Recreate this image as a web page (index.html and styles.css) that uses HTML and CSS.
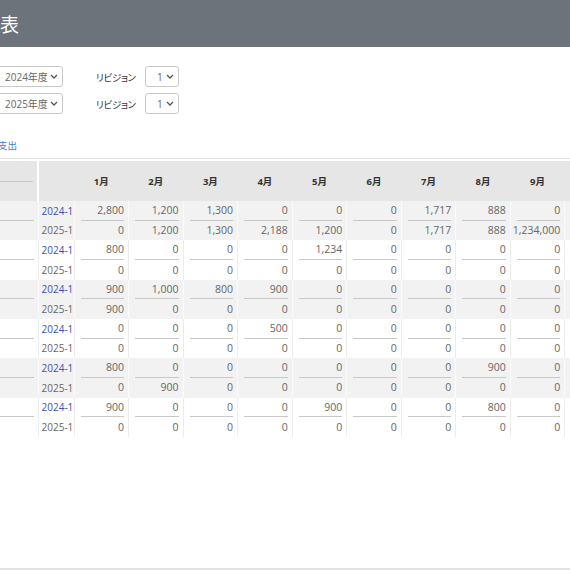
FILE: index.html
```html
<!DOCTYPE html>
<html lang="ja">
<head>
<meta charset="utf-8">
<link rel="stylesheet" href="styles.css">
</head>
<body>
<header class="topbar"><h1 class="title">表</h1></header>
<main class="content">
  <div class="filters">
    <div class="frow">
      <div class="sel sel-year"><span>2024年度</span><svg class="chev" viewBox="0 0 8 5" width="8" height="5"><path d="M1 1l3 3 3-3" fill="none" stroke="#555" stroke-width="1.3"/></svg></div>
      <span class="flabel">リビジョン</span>
      <div class="sel sel-rev"><span>1</span><svg class="chev" viewBox="0 0 8 5" width="8" height="5"><path d="M1 1l3 3 3-3" fill="none" stroke="#555" stroke-width="1.3"/></svg></div>
    </div>
    <div class="frow">
      <div class="sel sel-year"><span>2025年度</span><svg class="chev" viewBox="0 0 8 5" width="8" height="5"><path d="M1 1l3 3 3-3" fill="none" stroke="#555" stroke-width="1.3"/></svg></div>
      <span class="flabel">リビジョン</span>
      <div class="sel sel-rev"><span>1</span><svg class="chev" viewBox="0 0 8 5" width="8" height="5"><path d="M1 1l3 3 3-3" fill="none" stroke="#555" stroke-width="1.3"/></svg></div>
    </div>
  </div>
  <nav class="tabs"><a class="tab" href="#">支出</a></nav>
  <table class="grid">
    <colgroup>
      <col class="c-label"><col class="c-rev">
      <col class="c-m"><col class="c-m"><col class="c-m"><col class="c-m"><col class="c-m"><col class="c-m"><col class="c-m"><col class="c-m"><col class="c-m"><col class="c-m">
    </colgroup>
    <thead>
      <tr>
        <th class="h-label"><div class="h-split"></div></th>
        <th class="h-rev"></th>
        <th>1月</th><th>2月</th><th>3月</th><th>4月</th><th>5月</th><th>6月</th><th>7月</th><th>8月</th><th>9月</th><th>10月</th>
      </tr>
    </thead>
    <tbody>
      <tr class="g first"><td class="lab"><div class="u"></div></td><td class="rev"><a href="#">2024-1</a></td><td><div class="u">2,800</div></td><td><div class="u">1,200</div></td><td><div class="u">1,300</div></td><td><div class="u">0</div></td><td><div class="u">0</div></td><td><div class="u">0</div></td><td><div class="u">1,717</div></td><td><div class="u">888</div></td><td><div class="u">0</div></td><td><div class="u">0</div></td></tr>
      <tr class="g"><td class="lab"></td><td class="rev">2025-1</td><td>0</td><td>1,200</td><td>1,300</td><td>2,188</td><td>1,200</td><td>0</td><td>1,717</td><td>888</td><td>1,234,000</td><td>0</td></tr>

      <tr class="first"><td class="lab"><div class="u"></div></td><td class="rev"><a href="#">2024-1</a></td><td><div class="u">800</div></td><td><div class="u">0</div></td><td><div class="u">0</div></td><td><div class="u">0</div></td><td><div class="u">1,234</div></td><td><div class="u">0</div></td><td><div class="u">0</div></td><td><div class="u">0</div></td><td><div class="u">0</div></td><td><div class="u">0</div></td></tr>
      <tr><td class="lab"></td><td class="rev">2025-1</td><td>0</td><td>0</td><td>0</td><td>0</td><td>0</td><td>0</td><td>0</td><td>0</td><td>0</td><td>0</td></tr>

      <tr class="g first"><td class="lab"><div class="u"></div></td><td class="rev"><a href="#">2024-1</a></td><td><div class="u">900</div></td><td><div class="u">1,000</div></td><td><div class="u">800</div></td><td><div class="u">900</div></td><td><div class="u">0</div></td><td><div class="u">0</div></td><td><div class="u">0</div></td><td><div class="u">0</div></td><td><div class="u">0</div></td><td><div class="u">0</div></td></tr>
      <tr class="g"><td class="lab"></td><td class="rev">2025-1</td><td>900</td><td>0</td><td>0</td><td>0</td><td>0</td><td>0</td><td>0</td><td>0</td><td>0</td><td>0</td></tr>

      <tr class="first"><td class="lab"><div class="u"></div></td><td class="rev"><a href="#">2024-1</a></td><td><div class="u">0</div></td><td><div class="u">0</div></td><td><div class="u">0</div></td><td><div class="u">500</div></td><td><div class="u">0</div></td><td><div class="u">0</div></td><td><div class="u">0</div></td><td><div class="u">0</div></td><td><div class="u">0</div></td><td><div class="u">0</div></td></tr>
      <tr><td class="lab"></td><td class="rev">2025-1</td><td>0</td><td>0</td><td>0</td><td>0</td><td>0</td><td>0</td><td>0</td><td>0</td><td>0</td><td>0</td></tr>

      <tr class="g first"><td class="lab"><div class="u"></div></td><td class="rev"><a href="#">2024-1</a></td><td><div class="u">800</div></td><td><div class="u">0</div></td><td><div class="u">0</div></td><td><div class="u">0</div></td><td><div class="u">0</div></td><td><div class="u">0</div></td><td><div class="u">0</div></td><td><div class="u">900</div></td><td><div class="u">0</div></td><td><div class="u">0</div></td></tr>
      <tr class="g"><td class="lab"></td><td class="rev">2025-1</td><td>0</td><td>900</td><td>0</td><td>0</td><td>0</td><td>0</td><td>0</td><td>0</td><td>0</td><td>0</td></tr>

      <tr class="first"><td class="lab"><div class="u"></div></td><td class="rev"><a href="#">2024-1</a></td><td><div class="u">900</div></td><td><div class="u">0</div></td><td><div class="u">0</div></td><td><div class="u">0</div></td><td><div class="u">900</div></td><td><div class="u">0</div></td><td><div class="u">0</div></td><td><div class="u">800</div></td><td><div class="u">0</div></td><td><div class="u">0</div></td></tr>
      <tr><td class="lab"></td><td class="rev">2025-1</td><td>0</td><td>0</td><td>0</td><td>0</td><td>0</td><td>0</td><td>0</td><td>0</td><td>0</td><td>0</td></tr>
    </tbody>
  </table>
</main>
<footer class="foot"></footer>
</body>
</html>
```
FILE: styles.css
```css
html, body {
  margin: 0;
  padding: 0;
  overflow: hidden;
  background: #fff;
}
body {
  font-family: "Open Sans", "Noto Sans CJK JP", sans-serif;
  color: #555;
  display: flex;
  flex-direction: column;
  min-height: 100vh;
  height: 100vh;
}
.topbar {
  height: 47px;
  background: #6c737b;
  display: flex;
  align-items: center;
  flex-shrink: 0;
}
.title {
  margin: 0;
  font-family: "Noto Sans CJK JP", sans-serif;
  font-weight: 400;
  font-size: 19px;
  color: #fff;
  line-height: 1;
}
.content {
  flex: 1;
}
.filters {
  display: flex;
  flex-direction: column;
  gap: 6px;
  margin-top: 19px;
}
.frow {
  display: flex;
  align-items: center;
}
.sel {
  box-sizing: border-box;
  height: 21px;
  border: 1px solid #c9c9c9;
  border-radius: 3px;
  display: flex;
  align-items: center;
  justify-content: space-between;
  font-size: 10px;
  color: #666;
  background: #fff;
}
.sel-year {
  width: 91px;
  margin-left: -28px;
  padding: 0 4px 0 32px;
}
.sel-rev {
  width: 34px;
  padding: 0 4px 0 11px;
}
.chev {
  display: block;
}
.flabel {
  font-family: "Noto Sans CJK JP", sans-serif;
  font-feature-settings: "palt";
  font-size: 9.5px;
  color: #333;
  margin-left: 33px;
  width: 49px;
  letter-spacing: -0.3px;
}
.tabs {
  margin-top: 24px;
  height: 20px;
  border-bottom: 1px solid #e3e3e3;
  display: flex;
  align-items: flex-start;
}
.tab {
  display: block;
  margin-left: -2px;
  font-family: "Noto Sans CJK JP", sans-serif;
  font-size: 9.5px;
  line-height: 14px;
  color: #3b7dd8;
  text-decoration: none;
}
.grid {
  margin-top: 2px;
  border-collapse: collapse;
  table-layout: fixed;
  width: 620px;
  font-size: 10.5px;
}
.c-label { width: 38px; }
.c-rev { width: 36px; }
.c-m { width: 54.5px; }
.grid th {
  background: #e6e6e6;
  height: 40px;
  padding: 0;
  font-weight: 700;
  color: #333;
  font-size: 9.5px;
  text-align: center;
}
.grid th.h-label {
  vertical-align: top;
}
.h-split {
  height: 20px;
  margin-right: 4px;
  border-bottom: 1px solid #c8c8c8;
}
.grid th.h-rev {
  border-left: 2px solid #fff;
}
.grid td {
  height: 19.67px;
  padding: 0 4px 0 0;
  text-align: right;
  border-left: 1px solid #ececec;
  border-right: 1px solid #ececec;
  color: #666;
  line-height: 1;
  white-space: nowrap;
}
.grid tr.g td {
  background: #f2f2f2;
  border-color: #fbfbfb;
}
.grid td.lab {
  border-left: none;
  padding: 0;
}
.grid td.rev {
  text-align: left;
  padding-left: 3px;
  padding-right: 0;
  font-size: 10px;
}
.grid td.rev a {
  color: #3d4fb5;
  text-decoration: none;
}
.grid tr.first td {
  vertical-align: bottom;
}
.grid tr.first td.rev {
  vertical-align: middle;
}
.u {
  height: 18.67px;
  line-height: 19px;
  margin-left: 6px;
  border-bottom: 1px solid #c8c8c8;
}
.grid td.lab .u {
  margin-left: 0;
  margin-right: 4px;
}
.foot {
  height: 2px;
  background: #e2e2e2;
  flex-shrink: 0;
}
```
